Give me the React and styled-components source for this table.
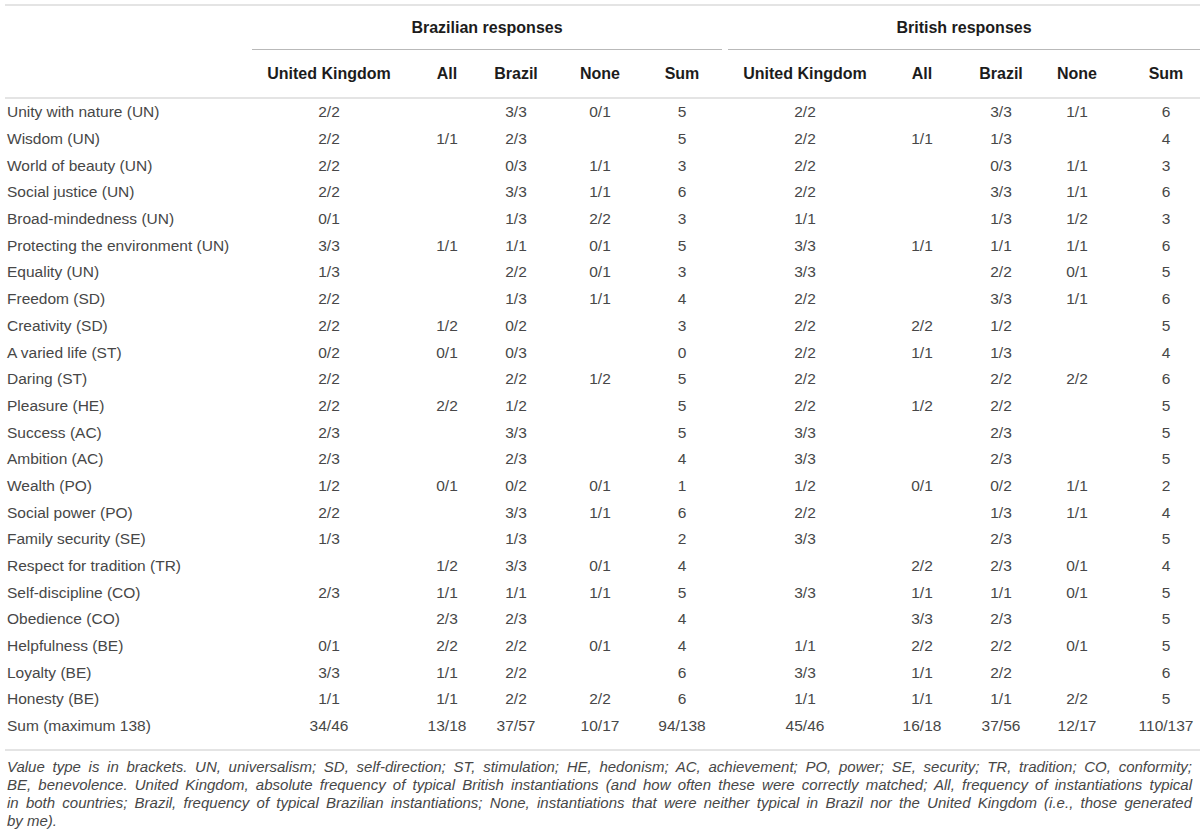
import React from 'react'
import styled, { createGlobalStyle } from 'styled-components'

const GlobalStyle = createGlobalStyle`
  body {
    margin: 0;
    background: #fff;
    font-family: "Liberation Sans", Arial, sans-serif;
  }
`;

// column widths and the side padding that puts each value on its centre line
const columns = [
  { w: 158, pad: -4 },
  { w: 68, pad: 6 },
  { w: 80, pad: -4 },
  { w: 82, pad: 2 },
  { w: 85, pad: -1 },
  { w: 160, pad: 0 },
  { w: 75, pad: -1 },
  { w: 80, pad: 2 },
  { w: 77, pad: -3 },
  { w: 83, pad: 15 },
];

const template = `247px ${columns.map((c) => c.w + 'px').join(' ')}`;

const subHeads = ['United Kingdom', 'All', 'Brazil', 'None', 'Sum'];

const rows = [
  ['Unity with nature (UN)', '2/2', '', '3/3', '0/1', '5', '2/2', '', '3/3', '1/1', '6'],
  ['Wisdom (UN)', '2/2', '1/1', '2/3', '', '5', '2/2', '1/1', '1/3', '', '4'],
  ['World of beauty (UN)', '2/2', '', '0/3', '1/1', '3', '2/2', '', '0/3', '1/1', '3'],
  ['Social justice (UN)', '2/2', '', '3/3', '1/1', '6', '2/2', '', '3/3', '1/1', '6'],
  ['Broad-mindedness (UN)', '0/1', '', '1/3', '2/2', '3', '1/1', '', '1/3', '1/2', '3'],
  ['Protecting the environment (UN)', '3/3', '1/1', '1/1', '0/1', '5', '3/3', '1/1', '1/1', '1/1', '6'],
  ['Equality (UN)', '1/3', '', '2/2', '0/1', '3', '3/3', '', '2/2', '0/1', '5'],
  ['Freedom (SD)', '2/2', '', '1/3', '1/1', '4', '2/2', '', '3/3', '1/1', '6'],
  ['Creativity (SD)', '2/2', '1/2', '0/2', '', '3', '2/2', '2/2', '1/2', '', '5'],
  ['A varied life (ST)', '0/2', '0/1', '0/3', '', '0', '2/2', '1/1', '1/3', '', '4'],
  ['Daring (ST)', '2/2', '', '2/2', '1/2', '5', '2/2', '', '2/2', '2/2', '6'],
  ['Pleasure (HE)', '2/2', '2/2', '1/2', '', '5', '2/2', '1/2', '2/2', '', '5'],
  ['Success (AC)', '2/3', '', '3/3', '', '5', '3/3', '', '2/3', '', '5'],
  ['Ambition (AC)', '2/3', '', '2/3', '', '4', '3/3', '', '2/3', '', '5'],
  ['Wealth (PO)', '1/2', '0/1', '0/2', '0/1', '1', '1/2', '0/1', '0/2', '1/1', '2'],
  ['Social power (PO)', '2/2', '', '3/3', '1/1', '6', '2/2', '', '1/3', '1/1', '4'],
  ['Family security (SE)', '1/3', '', '1/3', '', '2', '3/3', '', '2/3', '', '5'],
  ['Respect for tradition (TR)', '', '1/2', '3/3', '0/1', '4', '', '2/2', '2/3', '0/1', '4'],
  ['Self-discipline (CO)', '2/3', '1/1', '1/1', '1/1', '5', '3/3', '1/1', '1/1', '0/1', '5'],
  ['Obedience (CO)', '', '2/3', '2/3', '', '4', '', '3/3', '2/3', '', '5'],
  ['Helpfulness (BE)', '0/1', '2/2', '2/2', '0/1', '4', '1/1', '2/2', '2/2', '0/1', '5'],
  ['Loyalty (BE)', '3/3', '1/1', '2/2', '', '6', '3/3', '1/1', '2/2', '', '6'],
  ['Honesty (BE)', '1/1', '1/1', '2/2', '2/2', '6', '1/1', '1/1', '1/1', '2/2', '5'],
  ['Sum (maximum 138)', '34/46', '13/18', '37/57', '10/17', '94/138', '45/46', '16/18', '37/56', '12/17', '110/137'],
];

const notes = [
  'Value type is in brackets. UN, universalism; SD, self-direction; ST, stimulation; HE, hedonism; AC, achievement; PO, power; SE, security; TR, tradition; CO, conformity;',
  'BE, benevolence. United Kingdom, absolute frequency of typical British instantiations (and how often these were correctly matched; All, frequency of instantiations typical',
  'in both countries; Brazil, frequency of typical Brazilian instantiations; None, instantiations that were neither typical in Brazil nor the United Kingdom (i.e., those generated',
  'by me).',
];

export default function App() {
  return (
    <>
      <GlobalStyle />
      <Table>
        <GroupRow>
          <span />
          <GroupHead $inset="0 3px 0 0">Brazilian responses</GroupHead>
          <GroupHead $inset="0 0 0 3px">British responses</GroupHead>
        </GroupRow>
        <HeadRow>
          <span />
          {[...subHeads, ...subHeads].map((h, i) => (
            <HeadCell key={i} $pad={columns[i].pad}>{h}</HeadCell>
          ))}
        </HeadRow>
        <Body>
          {rows.map((r) => (
            <BodyRow key={r[0]}>
              <Label>{r[0]}</Label>
              {r.slice(1).map((v, i) => (
                <Cell key={i} $pad={columns[i].pad}>{v}</Cell>
              ))}
            </BodyRow>
          ))}
        </Body>
        <Note>
          {notes.map((n, i) => (
            <NoteLine key={i} $last={i === notes.length - 1}>{n}</NoteLine>
          ))}
        </Note>
      </Table>
    </>
  );
}

const Table = styled.div`
  margin: 4px 0 0 5px;
  width: 1195px;
  border-top: 2px solid #e4e4e4;
`;

const GridRow = styled.div`
  display: grid;
  grid-template-columns: ${template};
`;

const GroupRow = styled(GridRow)`
  height: 44px;
`;

const GroupHead = styled.div`
  grid-column: span 5;
  margin: ${(p) => p.$inset};
  display: flex;
  align-items: center;
  justify-content: center;
  border-bottom: 1px solid #b9b9b9;
  font-size: 16px;
  font-weight: bold;
  color: #1c1c1c;
`;

const HeadRow = styled(GridRow)`
  height: 47px;
  align-items: center;
  border-bottom: 2px solid #e4e4e4;
`;

const padding = (p) =>
  p.$pad >= 0 ? `padding-left: ${p.$pad}px;` : `padding-right: ${-p.$pad}px;`;

const HeadCell = styled.div`
  ${padding}
  text-align: center;
  white-space: nowrap;
  font-size: 16px;
  font-weight: bold;
  color: #1c1c1c;
`;

const Body = styled.div`
  padding-bottom: 9px;
  border-bottom: 2px solid #e4e4e4;
`;

const BodyRow = styled(GridRow)`
  height: 26.7px;
  align-items: center;
  font-size: 15.5px;
  color: #474747;
`;

const Label = styled.div`
  padding-left: 2px;
  white-space: nowrap;
`;

const Cell = styled.div`
  ${padding}
  text-align: center;
  white-space: nowrap;
`;

const Note = styled.div`
  width: 1187px;
  padding-top: 7px;
  font-size: 15px;
  font-style: italic;
  line-height: 18px;
  color: #474747;
`;

const NoteLine = styled.div`
  padding-left: 2px;
  text-align: justify;
  text-align-last: ${(p) => (p.$last ? 'left' : 'justify')};
  white-space: nowrap;
`;
